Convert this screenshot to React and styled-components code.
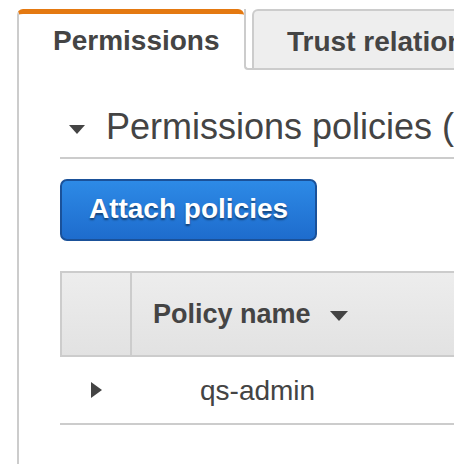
import React from 'react'
import styled, { createGlobalStyle } from 'styled-components'

const GlobalStyle = createGlobalStyle`
  html, body {
    margin: 0;
    padding: 0;
    background: #fff;
    overflow: hidden;
  }
  body {
    font-family: 'Liberation Sans', Arial, sans-serif;
    color: #444;
  }
`

const Page = styled.div`
  width: 454px;
  height: 464px;
  overflow: hidden;
  padding: 9px 0 0 17px;
  box-sizing: border-box;
`

const TabStrip = styled.div`
  display: flex;
  height: 61px;
  width: 900px;
`

const ActiveTab = styled.div`
  box-sizing: border-box;
  width: 227px;
  padding: 11px 0 13px 34px;
  border-left: 2px solid #ccc;
  border-top: 5px solid #e47911;
  border-top-left-radius: 6px;
  border-top-right-radius: 6px;
  font-size: 28px;
  line-height: 32px;
  font-weight: bold;
  color: #444;
  white-space: nowrap;
`

const TabRest = styled.div`
  flex: 1;
  display: flex;
  box-sizing: border-box;
  padding-left: 6px;
  border-left: 2px solid #ccc;
  border-bottom: 2px solid #ccc;
  border-bottom-left-radius: 4px;
`

const Tab = styled.div`
  box-sizing: border-box;
  padding: 15px 34px 0 33px;
  background: #eee;
  border: 2px solid #ccc;
  border-bottom: none;
  border-radius: 6px 6px 0 0;
  font-size: 28px;
  line-height: 32px;
  font-weight: bold;
  color: #444;
  white-space: nowrap;
`

const Panel = styled.div`
  border-left: 2px solid #ccc;
  padding: 37px 0 60px 41px;
  width: 900px;
`

const SectionHeader = styled.div`
  display: flex;
  align-items: center;
  padding-bottom: 10px;
  border-bottom: 2px solid #ccc;
`

const Caret = styled.span`
  display: inline-block;
  width: 0;
  height: 0;
  border-left: ${p => p.$size / 2}px solid transparent;
  border-right: ${p => p.$size / 2}px solid transparent;
  border-top: ${p => Math.round(p.$size * 0.55)}px solid #444;
  margin: ${p => p.$margin};
`

const RightCaret = styled.span`
  display: inline-block;
  width: 0;
  height: 0;
  border-top: 8px solid transparent;
  border-bottom: 8px solid transparent;
  border-left: 11px solid #444;
`

const Title = styled.h2`
  margin: 0;
  font-size: 36px;
  line-height: 40px;
  font-weight: normal;
  color: #444;
  white-space: nowrap;
`

const PrimaryButton = styled.button`
  display: flex;
  align-items: center;
  justify-content: center;
  box-sizing: border-box;
  width: 257px;
  height: 62px;
  margin-top: 20px;
  padding: 0 0 2px;
  border: 2px solid #1a5199;
  border-radius: 7px;
  background: linear-gradient(#2d8ae6, #1e6ccd);
  color: #fff;
  font-family: 'Liberation Sans', Arial, sans-serif;
  font-size: 28px;
  font-weight: bold;
  text-shadow: 0 2px 2px rgba(0, 0, 0, 0.45);
  cursor: pointer;
`

const Table = styled.div`
  margin-top: 30px;
  width: 860px;
`

const HeaderRow = styled.div`
  display: flex;
  height: 86px;
  box-sizing: border-box;
  border: 2px solid #ccc;
  border-right: none;
  background: linear-gradient(#ededed, #e2e2e2);
`

const BodyRow = styled.div`
  display: flex;
  height: 68px;
  box-sizing: border-box;
  border-bottom: 2px solid #ccc;
`

const SelectCell = styled.div`
  width: 70px;
  display: flex;
  align-items: center;
  justify-content: center;
  padding-left: ${p => (p.$header ? 0 : 2)}px;
  box-sizing: border-box;
  border-right: ${p => (p.$header ? '2px solid #ccc' : 'none')};
`

const HeaderCell = styled.div`
  display: flex;
  align-items: center;
  padding-left: 21px;
  font-size: 27px;
  font-weight: bold;
  color: #444;
  white-space: nowrap;
`

const Cell = styled.div`
  display: flex;
  align-items: center;
  padding-left: 70px;
  padding-top: 2px;
  font-size: 28px;
  color: #444;
  white-space: nowrap;
`

export default function App() {
  return (
    <Page>
      <GlobalStyle />
      <TabStrip>
        <ActiveTab>Permissions</ActiveTab>
        <TabRest>
          <Tab>Trust relationships</Tab>
        </TabRest>
      </TabStrip>
      <Panel>
        <SectionHeader>
          <Caret $size={17} $margin='4px 21px 0 9px' />
          <Title>Permissions policies (1 policy applied)</Title>
        </SectionHeader>
        <PrimaryButton>Attach policies</PrimaryButton>
        <Table>
          <HeaderRow>
            <SelectCell $header />
            <HeaderCell>
              Policy name
              <Caret $size={18} $margin='4px 0 0 19px' />
            </HeaderCell>
          </HeaderRow>
          <BodyRow>
            <SelectCell>
              <RightCaret />
            </SelectCell>
            <Cell>qs-admin</Cell>
          </BodyRow>
        </Table>
      </Panel>
    </Page>
  )
}
